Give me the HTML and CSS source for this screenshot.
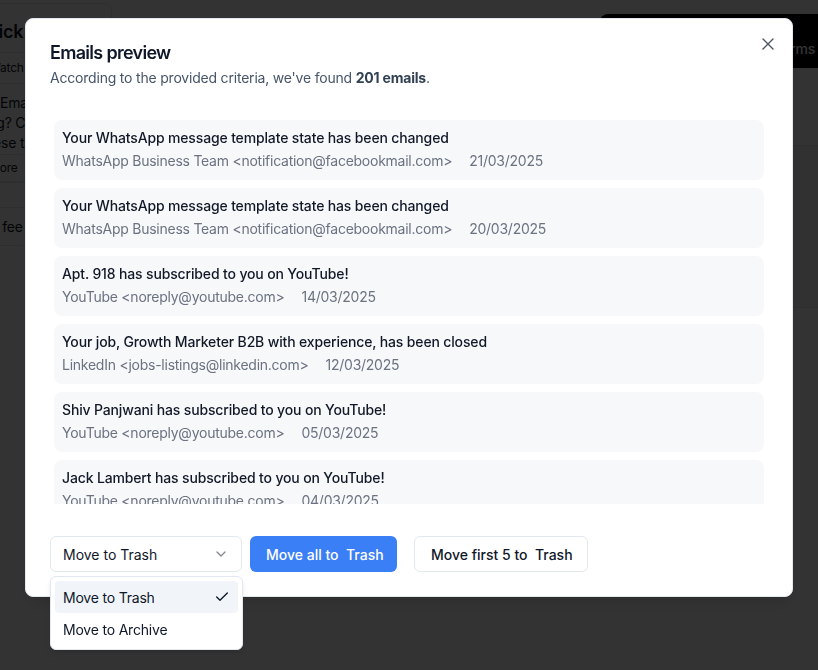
FILE: index.html
```html
<!DOCTYPE html>
<html lang="en">
<head>
<meta charset="utf-8">
<title>Emails preview</title>
<link rel="stylesheet" href="styles.css">
</head>
<body>
<div class="app">
  <aside class="side">
    <div class="side-card">
      <div class="side-title">Quick</div>
      <div class="side-row small">Watch</div>
      <div class="side-row para">w Ema<br>ing? C<br>hese t</div>
      <div class="side-row small more">More</div>
    </div>
    <div class="side-feed">ws fee</div>
  </aside>
  <main class="main"></main>
  <aside class="right">
    <div class="right-bar">Create Forms</div>
    <div class="right-sec"></div>
    <div class="right-sec tall"></div>
  </aside>
</div>

<div class="overlay"></div>

<div class="modal" role="dialog">
  <button class="close" aria-label="Close">
    <svg width="12" height="12" viewBox="0 0 12 12"><path d="M1 1 11 11M11 1 1 11" stroke="currentColor" stroke-width="1.4" stroke-linecap="round" fill="none"/></svg>
  </button>
  <header class="head">
    <h2 class="title">Emails preview</h2>
    <p class="desc">According to the provided criteria, we've found <strong>201 emails</strong>.</p>
  </header>

  <div class="list">
    <div class="mail"><div class="subj">Your WhatsApp message template state has been changed</div><div class="meta"><span>WhatsApp Business Team &lt;notification@facebookmail.com&gt;</span><span class="date">21/03/2025</span></div></div>
    <div class="mail"><div class="subj">Your WhatsApp message template state has been changed</div><div class="meta"><span>WhatsApp Business Team &lt;notification@facebookmail.com&gt;</span><span class="date">20/03/2025</span></div></div>
    <div class="mail"><div class="subj">Apt. 918 has subscribed to you on YouTube!</div><div class="meta"><span>YouTube &lt;noreply@youtube.com&gt;</span><span class="date">14/03/2025</span></div></div>
    <div class="mail"><div class="subj">Your job, Growth Marketer B2B with experience, has been closed</div><div class="meta"><span>LinkedIn &lt;jobs-listings@linkedin.com&gt;</span><span class="date">12/03/2025</span></div></div>
    <div class="mail"><div class="subj">Shiv Panjwani has subscribed to you on YouTube!</div><div class="meta"><span>YouTube &lt;noreply@youtube.com&gt;</span><span class="date">05/03/2025</span></div></div>
    <div class="mail"><div class="subj">Jack Lambert has subscribed to you on YouTube!</div><div class="meta"><span>YouTube &lt;noreply@youtube.com&gt;</span><span class="date">04/03/2025</span></div></div>
    <div class="mail"><div class="subj">Your WhatsApp message template state has been changed</div><div class="meta"><span>WhatsApp Business Team &lt;notification@facebookmail.com&gt;</span><span class="date">03/03/2025</span></div></div>
  </div>

  <footer class="actions">
    <div class="select-wrap">
      <button class="select">
        <span>Move to Trash</span>
        <svg class="chev" width="16" height="16" viewBox="0 0 24 24"><path d="m6 9 6 6 6-6" stroke="currentColor" stroke-width="2" stroke-linecap="round" stroke-linejoin="round" fill="none"/></svg>
      </button>
      <div class="menu">
        <div class="item active"><span>Move to Trash</span>
          <svg width="16" height="16" viewBox="0 0 24 24"><path d="M20 6 9 17l-5-5" stroke="currentColor" stroke-width="2" stroke-linecap="round" stroke-linejoin="round" fill="none"/></svg>
        </div>
        <div class="item"><span>Move to Archive</span></div>
      </div>
    </div>
    <button class="btn primary">Move all to&nbsp; Trash</button>
    <button class="btn outline">Move first 5 to&nbsp; Trash</button>
  </footer>
</div>
</body>
</html>
```

FILE: styles.css
```css
* { box-sizing: border-box; }

html, body {
  margin: 0;
  height: 100%;
}

body {
  font-family: Inter, "Noto Sans", "Liberation Sans", sans-serif;
  background: #ffffff;
  color: #0f172a;
  overflow: hidden;
  letter-spacing: -0.2px;
}

/* ---------- background app ---------- */
.app {
  display: flex;
  height: 100%;
  padding-top: 3px;
}

.side {
  width: 120px;
  margin-left: -8px;
  flex-shrink: 0;
}

.side-card {
  border: 1px solid #e5e7eb;
  border-radius: 8px;
  overflow: hidden;
}

.side-title {
  font-size: 18px;
  font-weight: 600;
  padding: 12px 0 4px 0;
  height: 49px;
  border-bottom: 1px solid #e5e7eb;
  line-height: 32px;
  margin-left: -19px;
}

.side-row {
  padding: 6px 0 6px 0;
  border-bottom: 1px solid #e5e7eb;
}

.side-row.small {
  font-size: 12px;
  line-height: 18px;
  margin-left: -4px;
}

.side-row.more {
  padding: 4px 0;
}

.side-row.para {
  font-size: 14px;
  line-height: 20px;
  padding: 9px 0 0 0;
  margin-left: -8px;
  height: 71px;
}

.side-feed {
  margin-top: 24px;
  padding: 10px 0 10px 0;
  margin-left: -12px;
  font-size: 14px;
  border-top: 1px solid #e5e7eb;
  border-bottom: 1px solid #e5e7eb;
}

.main { flex: 1; }

.right {
  width: 218px;
  flex-shrink: 0;
  padding-top: 11px;
}

.right-bar {
  height: 54px;
  background: #000;
  color: #fff;
  border-radius: 8px 0 0 0;
  font-size: 14px;
  font-weight: 500;
  text-align: right;
  line-height: 70px;
  padding-right: 3px;
  white-space: nowrap;
}

.right-sec {
  height: 78px;
  border-bottom: 1px solid #e5e7eb;
}

.right-sec.tall {
  height: 162px;
  background: #f5f5f5;
}

/* ---------- overlay + dialog ---------- */
.overlay {
  position: fixed;
  inset: 0;
  background: rgba(0, 0, 0, 0.8);
}

.modal {
  position: fixed;
  left: 25px;
  top: 18px;
  width: 768px;
  background: #ffffff;
  border: 1px solid #e2e8f0;
  border-radius: 8px;
  padding: 25px 24px 24px;
  box-shadow: 0 10px 15px -3px rgba(0,0,0,0.1), 0 4px 6px -4px rgba(0,0,0,0.1);
}

.close {
  position: absolute;
  right: 18px;
  top: 19px;
  width: 12px;
  height: 12px;
  padding: 0;
  border: 0;
  background: none;
  color: #4b5563;
  display: flex;
}

.head {
  display: flex;
  flex-direction: column;
  gap: 6px;
}

.title {
  margin: 0;
  font-size: 18px;
  line-height: 18px;
  font-weight: 600;
  letter-spacing: -0.7px;
  color: #0f172a;
}

.desc {
  margin: 0;
  font-size: 14px;
  line-height: 20px;
  color: #475569;
}

.desc strong {
  font-weight: 700;
  color: #334155;
}

.list {
  margin-top: 32px;
  height: 384px;
  overflow: hidden;
  padding: 0 4px;
  display: flex;
  flex-direction: column;
  gap: 8px;
}

.mail {
  flex-shrink: 0;
  background: #f7f8fa;
  border-radius: 8px;
  padding: 8px;
  display: flex;
  flex-direction: column;
  gap: 3px;
  height: 60px;
}

.subj {
  font-size: 14px;
  line-height: 20px;
  font-weight: 500;
  color: #111827;
  letter-spacing: -0.15px;
}

.meta {
  font-size: 14px;
  line-height: 20px;
  color: #6b7280;
  display: flex;
  letter-spacing: -0.25px;
}

.date { margin-left: 17px; }

.actions {
  margin-top: 32px;
  display: flex;
  align-items: center;
}

.select-wrap {
  position: relative;
  width: 192px;
  margin-right: 8px;
}

.select {
  width: 100%;
  height: 36px;
  border: 1px solid #e2e8f0;
  border-radius: 6px;
  background: #fff;
  padding: 0 12px;
  display: flex;
  align-items: center;
  justify-content: space-between;
  font: inherit;
  font-size: 14px;
  color: #0f172a;
}

.chev { color: #0f172a; opacity: 0.5; }

.menu {
  position: absolute;
  top: 40px;
  left: 0;
  width: 193px;
  background: #fff;
  border: 1px solid #e2e8f0;
  border-radius: 6px;
  padding: 4px;
  box-shadow: 0 4px 6px -1px rgba(0,0,0,0.1), 0 2px 4px -2px rgba(0,0,0,0.1);
  z-index: 5;
}

.item {
  height: 32px;
  padding: 0 8px;
  border-radius: 4px;
  display: flex;
  align-items: center;
  justify-content: space-between;
  font-size: 14px;
  color: #0f172a;
}

.item.active { background: #f1f5f9; }

.btn {
  height: 36px;
  border-radius: 6px;
  padding: 0 16px;
  font: inherit;
  font-size: 14px;
  font-weight: 500;
  white-space: nowrap;
}

.btn.primary {
  background: #3b7ff6;
  border: 0;
  color: #fff;
  width: 147px;
}

.btn.outline {
  margin-left: 17px;
  background: #fff;
  border: 1px solid #e2e8f0;
  color: #0f172a;
  width: 174px;
}
```
